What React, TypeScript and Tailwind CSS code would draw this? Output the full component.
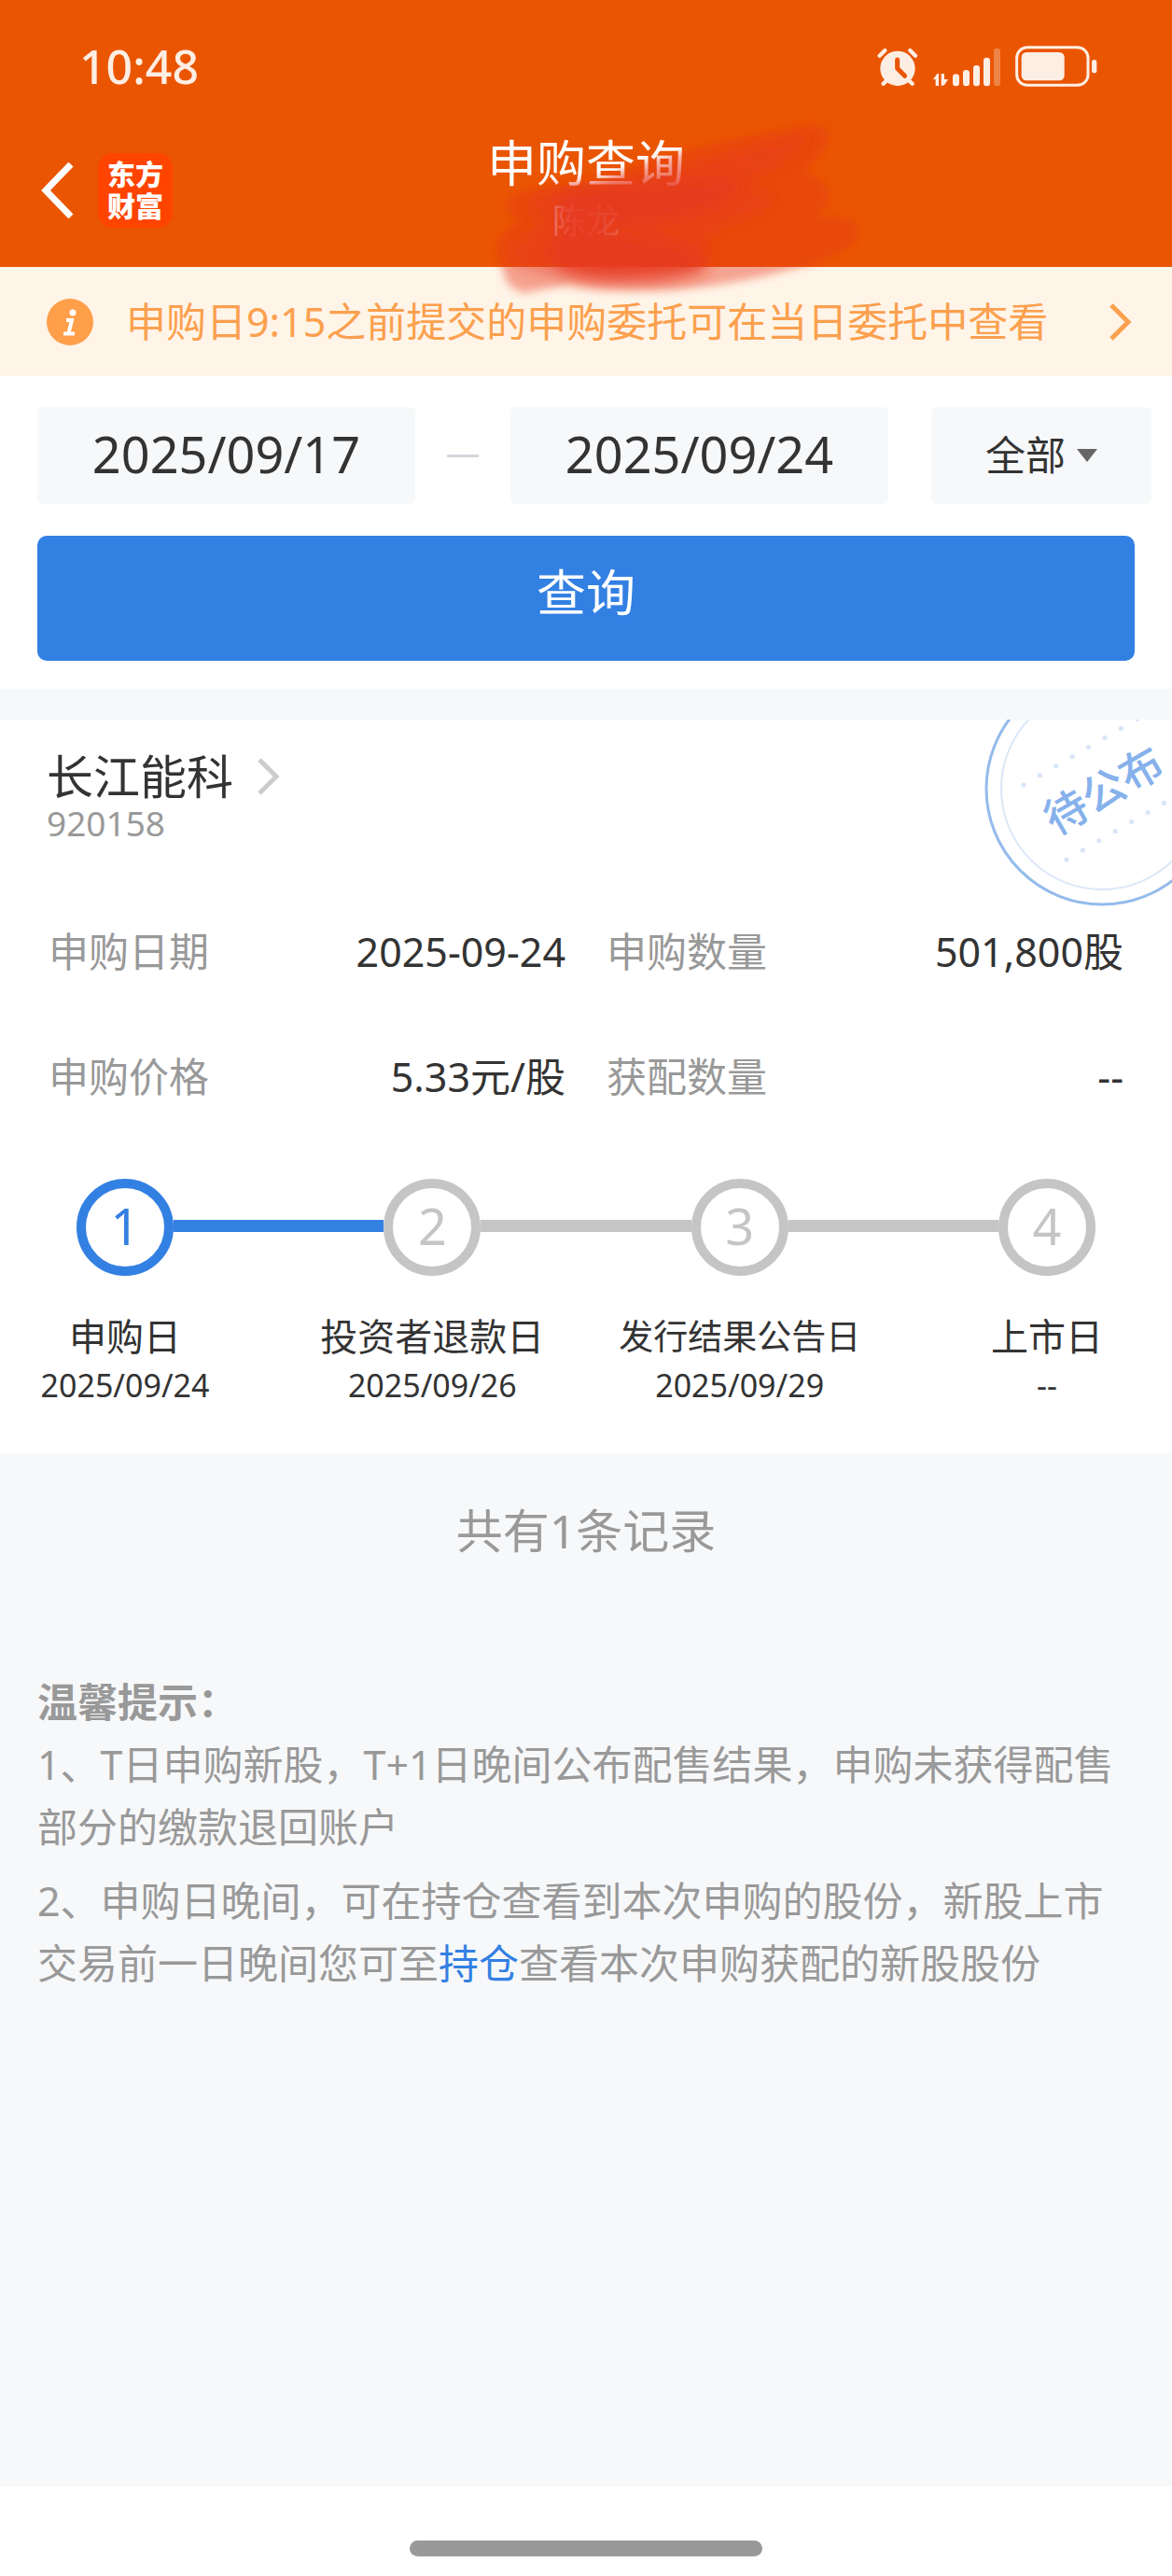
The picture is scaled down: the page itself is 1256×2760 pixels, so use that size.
import React from "react";

const steps = [
  { n: 1, label: "申购日", date: "2025/09/24", done: true, small: false },
  { n: 2, label: "投资者退款日", date: "2025/09/26", done: false, small: false },
  { n: 3, label: "发行结果公告日", date: "2025/09/29", done: false, small: true },
  { n: 4, label: "上市日", date: "--", done: false, small: false },
];

const fields = [
  { label: "申购日期", value: "2025-09-24" },
  { label: "申购数量", value: "501,800股" },
  { label: "申购价格", value: "5.33元/股" },
  { label: "获配数量", value: "--" },
];

const dots = [0, 1, 2, 3, 4, 5, 6, 7];

function StatusIcons() {
  return (
    <div className="flex items-end gap-[15px] text-[#fdeee4]">
      <svg width="44" height="42" viewBox="116 93 132 126" fill="currentColor" aria-label="闹钟">
        <circle cx="182" cy="160" r="56" />
        <g stroke="currentColor" strokeWidth="13" strokeLinecap="round">
          <path d="M124 119L141 102M239 119L222 102M136 209L148 197M229 209L217 197" />
        </g>
        <path d="M181 132V160L205 184" fill="none" stroke="#ea5502" strokeWidth="15" strokeLinecap="round" strokeLinejoin="round" />
      </svg>
      <svg width="74" height="42" viewBox="294 93 222 126" fill="currentColor" aria-label="信号">
        <path d="M297 195L310 177H315V216H305V195ZM323 177H333V195H345L333 214L323 216Z" />
        <rect x="360" y="178" width="21" height="39" rx="10" />
        <rect x="393" y="165" width="21" height="52" rx="10" />
        <rect x="426" y="150" width="21" height="67" rx="10" />
        <rect x="459" y="125" width="21" height="92" rx="10" />
        <rect x="492" y="95" width="21" height="122" rx="10" opacity="0.3" />
      </svg>
      <svg width="88" height="44" viewBox="560 89 264 132" fill="currentColor" aria-label="电量">
        <rect x="565" y="94" width="229" height="122" rx="34" fill="none" stroke="currentColor" strokeWidth="9" />
        <rect x="580" y="110" width="138" height="91" rx="16" />
        <rect x="806" y="134" width="16" height="43" rx="8" />
      </svg>
    </div>
  );
}

function Smear() {
  return (
    <svg className="pointer-events-none absolute left-1/2 top-[120px] -ml-[108px]" width="420" height="210" viewBox="520 120 420 210" aria-hidden="true">
      <defs>
        <filter id="edge" x="-20%" y="-20%" width="140%" height="140%">
          <feGaussianBlur stdDeviation="4" />
        </filter>
        <filter id="core" x="-30%" y="-50%" width="160%" height="200%">
          <feGaussianBlur stdDeviation="8" />
        </filter>
      </defs>
      <g fill="#e63a20">
        <path
          d="M870 134Q895 134 886 158L862 184Q896 196 886 222L872 234Q924 228 920 252Q912 272 850 288Q760 312 690 311Q640 312 610 305Q580 310 562 314Q540 308 540 290Q524 268 540 250Q550 240 556 236Q536 226 546 212Q560 200 640 194Q720 158 870 134Z"
          fillOpacity="0.42"
          filter="url(#edge)"
        />
        <path
          d="M868 142Q850 172 790 200Q860 214 800 232Q740 250 760 272Q764 300 700 304Q630 306 590 294Q540 290 548 262Q580 246 586 236Q550 224 580 208Q700 190 868 142Z"
          fillOpacity="0.4"
          filter="url(#core)"
        />
        <path
          d="M600 206Q700 192 790 196Q780 226 690 240Q600 248 700 256Q770 270 750 288Q700 300 640 298Q580 290 590 262Q610 244 596 226Z"
          fillOpacity="0.85"
          filter="url(#core)"
        />
      </g>
    </svg>
  );
}

function Stamp() {
  return (
    <svg className="absolute right-0 top-0" width="206" height="205" viewBox="0 0 206 205" role="img" aria-label="待公布">
      <circle cx="131" cy="74" r="124" fill="none" stroke="#94bbec" strokeWidth="3" />
      <circle cx="131" cy="74" r="108" fill="none" stroke="#dbe7f8" strokeWidth="2" />
      <g fill="#d9e6f8">
        {dots.map((i) => (
          <circle key={i} cx={47 + i * 17.4} cy={70 - i * 10.1} r="2.6" />
        ))}
        {dots.map((i) => (
          <circle key={i} cx={93 + i * 17.4} cy={150 - i * 10.1} r="2.6" />
        ))}
      </g>
      <text x="132" y="75" transform="rotate(-30 132 75)" textAnchor="middle" dominantBaseline="central" fontSize="46" fontWeight="500" fill="#86b1eb">
        待公布
      </text>
    </svg>
  );
}

export default function App() {
  return (
    <div className="flex min-h-screen flex-col bg-[#f7f8fa] font-['Noto_Sans','Noto_Sans_CJK_SC',sans-serif] text-[43px] leading-[66px] text-[#333]">
      <header className="relative bg-[#ea5502] text-white">
        <div className="flex items-center justify-between pl-[85px] pr-20 pt-[38px]">
          <span className="text-[50px] font-medium leading-[66px] text-[#fdeee4]">10:48</span>
          <StatusIcons />
        </div>
        <div className="grid grid-cols-[1fr_auto_1fr] items-center px-11 pt-[38px]">
          <div className="flex items-center gap-[26px] pb-5">
            <button type="button" aria-label="返回">
              <svg width="35" height="60" viewBox="0 0 35 60" fill="none" stroke="white" strokeWidth="7">
                <path d="M32 2L5 30L32 58" />
              </svg>
            </button>
            <div className="flex size-20 items-center justify-center rounded-2xl bg-[#ff4400] text-center text-[30px] font-black leading-[34px]">
              <span>
                东方
                <br />
                财富
              </span>
            </div>
          </div>
          <div className="pb-[21px] text-center">
            <h1 className="text-[53px] leading-[66px]">申购查询</h1>
            <p className="text-[36px] leading-[57px]">陈龙</p>
          </div>
        </div>
        <Smear />
      </header>

      <a href="#notice" className="flex h-[117px] items-center bg-[#fff4e8] pl-[50px] pr-[43px] text-[#fba04e]">
        <svg width="50" height="50" viewBox="0 0 50 50" aria-hidden="true">
          <circle cx="25" cy="25" r="25" fill="#ff9f4a" />
          <circle cx="28" cy="15" r="3.5" fill="white" />
          <path d="M21 23H27L23.5 37M18 37.500H30" fill="none" stroke="white" strokeWidth="4" />
        </svg>
        <span className="ml-[35px] flex-1 whitespace-nowrap">申购日9:15之前提交的申购委托可在当日委托中查看</span>
        <svg width="24" height="40" viewBox="0 0 24 40" fill="none" stroke="currentColor" strokeWidth="5" aria-hidden="true">
          <path d="M2 2L20 20L2 38" />
        </svg>
      </a>

      <section className="bg-white pb-[30px] pt-[33px]">
        <div className="flex items-center pl-10 pr-[22px]">
          <button type="button" className="h-[104px] flex-1 rounded-md bg-[#f7f8fa] pb-1 text-[54px]">2025/09/17</button>
          <span className="mx-[34px] h-[3px] w-[34px] bg-[#d2d6dc]" />
          <button type="button" className="h-[104px] flex-1 rounded-md bg-[#f7f8fa] pb-1 text-[54px]">2025/09/24</button>
          <button type="button" className="ml-[46px] flex h-[104px] w-[236px] items-center justify-center gap-3 rounded-md bg-[#f7f8fa]">
            全部
            <svg width="22" height="14" viewBox="0 0 22 14" fill="#666" aria-hidden="true">
              <path d="M0 0H22L11 14Z" />
            </svg>
          </button>
        </div>
        <div className="px-10 pt-[34px]">
          <button type="button" className="h-[134px] w-full rounded-[10px] bg-[#3380e3] pb-3 text-[53px] text-white">查询</button>
        </div>
      </section>

      <section className="relative mt-[33px] bg-white pb-[54px] pt-[31px]">
        <Stamp />
        <div className="px-[50px]">
          <a href="#stock" className="flex items-center gap-[26px] text-[50px] leading-[60px]">
            长江能科
            <svg width="24" height="40" viewBox="0 0 24 40" fill="none" stroke="#ccc" strokeWidth="5" aria-hidden="true">
              <path d="M2 2L20 20L2 38" />
            </svg>
          </a>
          <p className="text-[37px] leading-[40px] text-[#999]">920158</p>
        </div>
        <dl className="grid grid-cols-2 gap-x-11 gap-y-[68px] px-[52px] pt-[85px]">
          {fields.map((f) => (
            <div key={f.label} className="flex justify-between">
              <dt className="text-[#999]">{f.label}</dt>
              <dd>{f.value}</dd>
            </div>
          ))}
        </dl>
        <ol className="flex px-[82px] pt-[76px]">
          {steps.map((s, i) => (
            <React.Fragment key={s.n}>
              {i > 0 && <li aria-hidden="true" className={i === 1 ? "mt-[44px] h-[13px] flex-1 bg-[#3380e3]" : "mt-[44px] h-[13px] flex-1 bg-[#c5c5c5]"} />}
              <li className="flex w-[104px] flex-col items-center whitespace-nowrap">
                <span className={s.done ? "flex size-[104px] items-center justify-center rounded-full border-10 border-[#3380e3] pb-1 text-[54px] text-[#3380e3]" : "flex size-[104px] items-center justify-center rounded-full border-10 border-[#c5c5c5] pb-1 text-[54px] text-[#c5c5c5]"}>{s.n}</span>
                <span className={s.small ? "pt-8 text-[37px]" : "pt-8 text-[40px]"}>{s.label}</span>
                <span className="text-[34px] leading-[38px]">{s.date}</span>
              </li>
            </React.Fragment>
          ))}
        </ol>
      </section>

      <main className="flex-1 px-10 leading-[67px] text-[#999]">
        <p className="pt-[50px] text-center text-[50px]">共有1条记录</p>
        <h2 className="pt-[116px] font-bold">温馨提示：</h2>
        <p>1、T日申购新股，T+1日晚间公布配售结果，申购未获得配售部分的缴款退回账户</p>
        <p className="pt-3">
          2、申购日晚间，可在持仓查看到本次申购的股份，新股上市交易前一日晚间您可至
          <a href="#positions" className="text-[#3380e3]">持仓</a>
          查看本次申购获配的新股股份
        </p>
      </main>

      <footer className="flex h-24 justify-center bg-white pt-[58px]">
        <span className="h-[17px] w-[378px] rounded-full bg-[#999]" />
      </footer>
    </div>
  );
}
